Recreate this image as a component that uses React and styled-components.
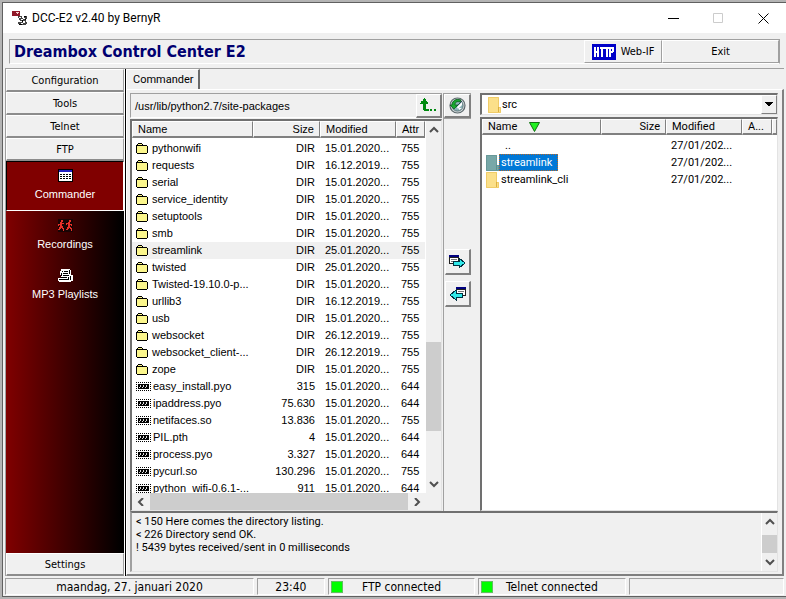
import styled, { createGlobalStyle } from "styled-components";

const GlobalStyle = createGlobalStyle`
  * {
    box-sizing: border-box;
  }

  body {
    margin: 0;
    font-family: "DejaVu Sans Condensed", "DejaVu Sans", Tahoma, sans-serif;
    font-size: 11px;
    color: #000;
  }

  button {
    font: inherit;
    color: inherit;
    padding: 0;
    margin: 0;
    border: 0;
    background: none;
  }

  svg {
    display: block;
    flex: none;
  }
`;

const Desktop = styled.div`
  height: 100vh;
  min-height: 400px;
  padding: 2px 0 2px 2px;
  background: #b4b4b4;
`;

const Window = styled.div`
  height: 100%;
  display: flex;
  flex-direction: column;
  border: 1px solid #606060;
  border-right: 0;
  background: #f0f0f0;
`;

const TitleBar = styled.header`
  display: flex;
  align-items: center;
  height: 30px;
  padding-left: 9px;
  background: #fff;
  font-family: Roboto, "Noto Sans", sans-serif;
  font-size: 12px;

  span {
    flex: 1;
    margin-left: 5px;
  }
`;

const WindowButton = styled.button`
  display: flex;
  align-items: center;
  justify-content: center;
  width: 45px;
  height: 29px;
`;

const Banner = styled.div`
  display: flex;
  height: 25px;
  margin: 6px 6px 4px;
  border: 1px solid #a0a0a0;
  border-bottom-color: #fff;

  h1 {
    flex: 1;
    margin: 0;
    padding-left: 4px;
    font-size: 16px;
    line-height: 23px;
    color: #000070;
  }
`;

const BannerButton = styled.button`
  display: flex;
  align-items: center;
  justify-content: center;
  gap: 5px;
  width: ${(props) => props.$width}px;
  border: 1px solid #a0a0a0;
  border-top-color: #fff;
  border-left-color: #fff;
`;

const Main = styled.div`
  flex: 1;
  min-height: 0;
  display: flex;
  margin: 0 2px;
  border-top: 1px solid #a0a0a0;
`;

const Sidebar = styled.nav`
  display: flex;
  flex-direction: column;
  width: 120px;
  border-left: 1px solid #a0a0a0;
  border-right: 1px solid #fff;
`;

const SideButton = styled.button`
  height: 23px;
  border-top: 1px solid #fff;
  border-left: 1px solid #fff;
  border-right: 1px solid #a0a0a0;
  border-bottom: 2px solid #8c8c8c;
  font-size: 11px;
`;

const SideGroup = styled.div`
  flex: 1;
  display: flex;
  flex-direction: column;
  background: linear-gradient(90deg, #800000, #000 98%);
`;

const SideItem = styled.button`
  display: flex;
  flex-direction: column;
  align-items: center;
  gap: 6px;
  height: 50px;
  padding-top: 7px;
  border: 1px solid;
  border-color: ${(props) => (props.$active ? "#000 #fff #fff #000" : "transparent")};
  background: ${(props) => (props.$active ? "#800000" : "none")};
  font-family: "Liberation Sans", Arial, sans-serif;
  font-size: 11px;
  line-height: 13px;
  color: #fff;
`;

const Page = styled.main`
  flex: 1;
  min-width: 0;
  display: flex;
  flex-direction: column;
  border-left: 1px solid #000;
  font-family: Roboto, Tahoma, sans-serif;
`;

const TabRow = styled.div`
  height: 20px;
`;

const Tab = styled.button`
  height: 20px;
  padding: 0 4px 0 6px;
  border-top: 1px solid #fff;
  border-left: 1px solid #fff;
  border-right: 2px solid #696969;
`;

const TabPanel = styled.section`
  flex: 1;
  min-height: 0;
  display: flex;
  flex-direction: column;
  padding: 3px 4px 2px 3px;
  border-top: 1px solid #fff;
  border-left: 1px solid #fff;
  border-right: 2px solid #808080;
  border-bottom: 2px solid #808080;
`;

const Panes = styled.div`
  flex: 1;
  min-height: 0;
  display: grid;
  grid-template-columns: minmax(0, 312fr) 28px minmax(0, 306fr);
  column-gap: 1px;
`;

const Pane = styled.div`
  min-height: 0;
  display: flex;
  flex-direction: column;
  margin-left: ${(props) => (props.$inset ? 8 : 0)}px;
`;

const PathBar = styled.div`
  display: flex;
  align-items: center;
  height: 25px;
  margin-bottom: 1px;
  border: 1px solid #a0a0a0;
  border-bottom-color: #fff;
  border-right: 0;
  font-family: "Liberation Sans", Arial, sans-serif;
  font-size: 11px;

  span {
    flex: 1;
    padding-left: 4px;
  }
`;

const ToolButton = styled.button`
  display: flex;
  align-items: center;
  justify-content: center;
  width: ${(props) => props.$width || 26}px;
  height: ${(props) => props.$height || 24}px;
  border: 1px solid #fff;
  border-right: 2px solid #808080;
  border-bottom: 2px solid #808080;
`;

const Middle = styled.div`
  display: flex;
  flex-direction: column;
  align-items: flex-end;
  border-top: 1px solid #a0a0a0;
  border-left: 1px solid #a0a0a0;

  hr {
    align-self: stretch;
    margin: 0 0 130px;
    border: 0;
    border-top: 1px solid #a0a0a0;
  }

  button + button {
    margin-top: 6px;
  }
`;

const ListBox = styled.div`
  flex: 1;
  min-height: 0;
  display: grid;
  grid-template-columns: minmax(0, 1fr) auto;
  grid-template-rows: minmax(0, 1fr) auto;
  border: 1px solid #e3e3e3;
  border-top: 2px solid #707070;
  border-left: 2px solid #707070;
  background: #fff;
`;

const Viewport = styled.div`
  overflow: hidden;
`;

const FileTable = styled.table`
  width: 100%;
  table-layout: fixed;
  border-collapse: separate;
  border-spacing: 0;
  font-family: ${(props) => (props.$plain ? '"Liberation Sans", Arial, sans-serif' : "inherit")};

  th {
    height: ${(props) => (props.$plain ? 17 : 16)}px;
    padding: 0 5px;
    border-top: 1px solid #fff;
    border-left: 1px solid #fff;
    border-right: 1px solid #808080;
    border-bottom: 2px solid #808080;
    background: #f0f0f0;
    font-weight: 400;
    line-height: 13px;
    text-align: left;
    white-space: nowrap;
  }

  td {
    height: 17px;
    padding: 0 5px;
    line-height: 17px;
    vertical-align: top;
    white-space: nowrap;
    overflow: hidden;
  }

  th:nth-child(2),
  td:nth-child(2) {
    text-align: right;
  }

  thead::after {
    content: "";
    display: block;
    height: 2px;
  }
`;

const FileRow = styled.tr`
  background: ${(props) => (props.$marked ? "#f0f0f0" : "none")};
`;

const FileName = styled.div`
  display: flex;
  align-items: center;
  gap: ${(props) => props.$gap}px;
  margin-left: -1px;
  height: 17px;
`;

const Label = styled.span`
  padding: 0 6px 0 2px;
  line-height: 17px;
  background: ${(props) => (props.$selected ? "#0078d7" : "none")};
  color: ${(props) => (props.$selected ? "#fff" : "inherit")};
  outline: ${(props) => (props.$selected ? "1px dotted #b86828" : "none")};
  outline-offset: -1px;
`;

const SortHead = styled.div`
  display: flex;
  align-items: center;
  gap: 12px;
`;

const VScroll = styled.div`
  display: flex;
  flex-direction: column;
  align-items: center;
  width: 16px;
  background: #f0f0f0;
  border-left: 1px solid #fff;

  button {
    padding: 5px 0;
  }
`;

const HScroll = styled.div`
  grid-column: 1 / -1;
  display: flex;
  align-items: center;
  height: 17px;
  background: #f0f0f0;

  button {
    padding: 0 5px;
  }
`;

const Spacer = styled.div`
  flex: ${(props) => props.$size};
`;

const Thumb = styled.div`
  flex: ${(props) => props.$size};
  align-self: stretch;
  background: #cdcdcd;
`;

const Combo = styled.div`
  position: relative;
  margin-bottom: 2px;

  select {
    display: block;
    width: 100%;
    height: 22px;
    padding: 0 20px 0 20px;
    appearance: none;
    border: 1px solid #e3e3e3;
    border-top: 2px solid #707070;
    border-left: 2px solid #707070;
    border-radius: 0;
    background: #fff;
    color: #000;
    font: inherit;
  }

  > svg {
    position: absolute;
    top: 4px;
    left: 8px;
  }
`;

const ComboArrow = styled.span`
  position: absolute;
  top: 2px;
  right: 1px;
  bottom: 1px;
  width: 16px;
  display: flex;
  align-items: center;
  justify-content: center;
  border: 1px solid #fff;
  border-right-color: #808080;
  border-bottom-color: #808080;
  background: #f0f0f0;
  pointer-events: none;
`;

const Log = styled.div`
  display: flex;
  height: 61px;
  border: 1px solid #e3e3e3;
  border-top: 2px solid #707070;
  border-left: 2px solid #a0a0a0;

  textarea {
    flex: 1;
    padding: 2px 4px;
    border: 0;
    outline: 0;
    resize: none;
    overflow: hidden;
    background: none;
    color: #000;
    font: inherit;
    line-height: 13px;
  }
`;

const StatusBar = styled.footer`
  display: flex;
  gap: 3px;
  margin: 2px 2px 1px;
  font-size: 12px;
`;

const StatusCell = styled.div`
  flex: ${(props) => props.$size} 1 ${(props) => props.$size}px;
  display: flex;
  align-items: center;
  height: 17px;
  padding: 0 2px;
  border: 1px solid #a0a0a0;
  border-right-color: #fff;
  border-bottom-color: #fff;

  span {
    flex: 1;
    text-align: center;
    white-space: nowrap;
  }

  i + span {
    padding-right: 12px;
  }
`;

const Lamp = styled.i`
  width: 12px;
  height: 12px;
  border: 1px solid #60c060;
  background: #00ff00;
`;

const AppIcon = () => (
  <svg width="15" height="16" shapeRendering="crispEdges">
    <path d="M0 1h8v5H0z" fill="#901828" />
    <path d="M4 2h3v1H4zM5 3h1v1H5z" fill="#f8d0d0" />
    <path d="M6 6h4v2h2V6h3v3h-1v3h1v2h-1v1H8v-1H6v-2h2v-2H7V8H6z" fill="#444" />
    <path d="M7 7h2v1H7zM9 9h2v1H9zM11 8h2v1h-2zM8 11h2v1H8zM11 11h2v2h-2zM9 13h2v1H9z" fill="#fff" />
    <path d="M12 6h2v1h-2zM10 10h1v2h-1zM13 9h1v1h-1zM7 14h3v1H7z" fill="#000" />
  </svg>
);

const HttpIcon = () => (
  <svg width="24" height="16" shapeRendering="crispEdges">
    <path d="M0 0h24v16H0z" fill="#0000c8" />
    <path
      d="M3 3v10M6 3v10M3 8h4M8 4h5M10 3v10M13 4h4M15 3v10M18 3v10M18 4h4M21 4v4M18 8h3"
      stroke="#fff"
      strokeWidth="2"
      fill="none"
    />
  </svg>
);

const GridIcon = () => (
  <svg width="15" height="13" shapeRendering="crispEdges">
    <path d="M0 0h15v13H0z" fill="#000" />
    <path d="M1 1h13v2H1z" fill="#2020c0" />
    <path d="M1 3h13v9H1z" fill="#fff" />
    <path d="M2 5.5h11M2 7.5h11M2 9.5h11" stroke="#000" strokeDasharray="2 1" />
  </svg>
);

const RunnersIcon = () => (
  <svg width="15" height="13" shapeRendering="crispEdges">
    <path d="M0 0h15v13H0z" fill="#180404" />
    <path
      d="M3 1h2v2H3zM2 3h2v1h2v1H4v2h1v2h1v3H5v-2H4V9H3v1H2v1H0v-1h1V8h1V6H1v1H0V5h2zM11 1h2v2h-2zM10 3h2v2h2v2h-1V6h-1v2h1v1h1v3h-1v-2h-1V9h-1v1h-1v1H8v-1h1V8h1V5H9v1H8V4h2z"
      fill="#e83028"
    />
  </svg>
);

const PlaylistIcon = () => (
  <svg width="15" height="13" shapeRendering="crispEdges">
    <path d="M3 0h9v1h1v5h2v6h-2v1H1v-1H0V9h3V6H2V2h1z" fill="#fff" />
    <path
      d="M4 2h1v1H4zM6 2h4v1H6zM5 4h5v1H5zM5 6h6v1H5zM11 1h1v4h-1zM3 4h1v3H3zM1 10h9v1H1zM10 8h1v3h-1zM3 8h6v1H3zM12 7h1v4h-1z"
      fill="#000"
    />
  </svg>
);

const FolderIcon = () => (
  <svg width="12" height="11" shapeRendering="crispEdges">
    <path d="M1 1h1V0h4v1h1v1h4v1h1v7h-1v1H1v-1H0V2h1z" fill="#000" />
    <path d="M2 1h4v1H2zM1 3h10v7H1z" fill="#fbf68c" />
  </svg>
);

const BinaryIcon = () => (
  <svg width="15" height="9" shapeRendering="crispEdges">
    <path d="M0 .5h15M0 8.5h15" stroke="#000" strokeDasharray="1 1" />
    <path d="M.5 0v9M14.5 0v9" stroke="#000" strokeDasharray="1 1" />
    <path d="M2 2h11v5H2z" fill="#000" />
    <path d="M3 5h1v1H3zM4 3h1v2H4zM6 5h1v1H6zM7 3h1v2H7zM9 5h1v1H9zM10 3h1v2h-1z" fill="#ddd" />
  </svg>
);

const WinFolder = ({ selected }) => (
  <svg width="13" height="16">
    <path d="M0 0h11v10h2v6H0z" fill={selected ? "#78a8a8" : "#fbe08a"} />
    <path d="M.5 .5h10v10h2v5H.5z" fill="none" stroke={selected ? "#689898" : "#f0cc68"} />
    <path d="M10.5 10v5" stroke={selected ? "#5c9090" : "#dcb040"} />
  </svg>
);

const UpIcon = () => (
  <svg width="17" height="14" shapeRendering="crispEdges">
    <path d="M4 0h1v1h1v2h1v1h1v2H6v5h3v2H4v-1H3V6H0V5h1V3h2V1h1z" fill="#008a10" />
    <path d="M10 11h2v2h-2zM14 11h2v2h-2z" fill="#008a10" />
  </svg>
);

const HistoryIcon = () => (
  <svg width="17" height="17" viewBox="0 0 17 17">
    <circle cx="8.5" cy="8.5" r="7.5" fill="#d4dcde" stroke="#5c686c" strokeWidth="1.2" />
    <circle cx="8.5" cy="8.5" r="5.6" fill="#8cb4b8" stroke="#506468" strokeWidth=".8" />
    <path d="M8 10l5-5v3l-4 4zM10 11h3l-3 2z" fill="#fff" />
    <path d="M7 10l6-6" stroke="#284858" strokeWidth="1" />
    <path d="M12 3C7 1 3 4 3 8H1l4 4 4-4H6c0-3 2-4 5-3z" fill="#18a830" stroke="#085818" strokeWidth=".7" />
  </svg>
);

const TransferIcon = ({ back }) => (
  <svg width="17" height="14" shapeRendering="crispEdges">
    <g transform={back ? "translate(7 0)" : undefined}>
      <path d="M0 0h10v9H0z" fill="#202020" />
      <path d="M0 0h10v2H0z" fill="#000080" />
      <path d="M1 3h8v5H1z" fill="#fff" />
      <path d="M2 4.5h6M2 6.5h4" stroke="#777" />
    </g>
    <path
      d="M4 6h6V3l6 5-6 5v-3H4z"
      transform={back ? "translate(17 0) scale(-1 1)" : undefined}
      fill="#30e8e8"
      stroke="#003040"
    />
  </svg>
);

const arrows = {
  up: "M1 6l4-4 4 4",
  down: "M1 2l4 4 4-4",
  left: "M6 0L2 4l4 4",
  right: "M2 0l4 4-4 4",
};

const Chevron = ({ dir }) => {
  const tall = dir === "left" || dir === "right";
  return (
    <svg width={tall ? 8 : 10} height="8">
      <path d={arrows[dir]} fill="none" stroke="#505050" strokeWidth="2" />
    </svg>
  );
};

const remoteFiles = [
  ["pythonwifi", "DIR", "15.01.2020...", "755"],
  ["requests", "DIR", "16.12.2019...", "755"],
  ["serial", "DIR", "15.01.2020...", "755"],
  ["service_identity", "DIR", "15.01.2020...", "755"],
  ["setuptools", "DIR", "15.01.2020...", "755"],
  ["smb", "DIR", "15.01.2020...", "755"],
  ["streamlink", "DIR", "25.01.2020...", "755"],
  ["twisted", "DIR", "25.01.2020...", "755"],
  ["Twisted-19.10.0-p...", "DIR", "15.01.2020...", "755"],
  ["urllib3", "DIR", "16.12.2019...", "755"],
  ["usb", "DIR", "15.01.2020...", "755"],
  ["websocket", "DIR", "26.12.2019...", "755"],
  ["websocket_client-...", "DIR", "26.12.2019...", "755"],
  ["zope", "DIR", "15.01.2020...", "755"],
  ["easy_install.pyo", "315", "15.01.2020...", "644"],
  ["ipaddress.pyo", "75.630", "15.01.2020...", "644"],
  ["netifaces.so", "13.836", "15.01.2020...", "755"],
  ["PIL.pth", "4", "15.01.2020...", "644"],
  ["process.pyo", "3.327", "15.01.2020...", "644"],
  ["pycurl.so", "130.296", "15.01.2020...", "755"],
  ["python_wifi-0.6.1-...", "911", "15.01.2020...", "644"],
];

const localFiles = ["streamlink", "streamlink_cli"];

const logText = `< 150 Here comes the directory listing.
< 226 Directory send OK.
! 5439 bytes received/sent in 0 milliseconds`;

const RemotePane = () => (
  <Pane>
    <PathBar>
      <span>/usr/lib/python2.7/site-packages</span>
      <ToolButton aria-label="Up one directory">
        <UpIcon />
      </ToolButton>
    </PathBar>
    <ListBox>
      <Viewport>
        <FileTable $plain>
          <colgroup>
            <col />
            <col width="67" />
            <col width="76" />
            <col width="29" />
          </colgroup>
          <thead>
            <tr>
              <th>Name</th>
              <th>Size</th>
              <th>Modified</th>
              <th>Attr</th>
            </tr>
          </thead>
          <tbody>
            {remoteFiles.map(([name, size, modified, attr]) => (
              <FileRow key={name} $marked={name === "streamlink"}>
                <td>
                  <FileName $gap={size === "DIR" ? 2 : 0}>
                    {size === "DIR" ? <FolderIcon /> : <BinaryIcon />}
                    <Label>{name}</Label>
                  </FileName>
                </td>
                <td>{size}</td>
                <td>{modified}</td>
                <td>{attr}</td>
              </FileRow>
            ))}
          </tbody>
        </FileTable>
      </Viewport>
      <VScroll>
        <button aria-label="Scroll up">
          <Chevron dir="up" />
        </button>
        <Spacer $size={204} />
        <Thumb $size={90} />
        <Spacer $size={44} />
        <button aria-label="Scroll down">
          <Chevron dir="down" />
        </button>
      </VScroll>
      <HScroll>
        <button aria-label="Scroll left">
          <Chevron dir="left" />
        </button>
        <Thumb $size={1} />
        <button aria-label="Scroll right">
          <Chevron dir="right" />
        </button>
        <Spacer $size="0 0 15px" />
      </HScroll>
    </ListBox>
  </Pane>
);

const LocalPane = () => (
  <Pane $inset>
    <Combo>
      <select aria-label="Local folder" defaultValue="src">
        <option>src</option>
      </select>
      <WinFolder />
      <ComboArrow>
        <svg width="8" height="5" shapeRendering="crispEdges">
          <path d="M0 0h8L4 5z" />
        </svg>
      </ComboArrow>
    </Combo>
    <ListBox>
      <Viewport>
        <FileTable>
          <colgroup>
            <col />
            <col width="65" />
            <col width="76" />
            <col width="30" />
            <col width="5" />
          </colgroup>
          <thead>
            <tr>
              <th>
                <SortHead>
                  Name
                  <svg width="11" height="10">
                    <path d="M.5 .5h10l-5 9z" fill="#20f020" stroke="#107010" />
                  </svg>
                </SortHead>
              </th>
              <th>Size</th>
              <th>Modified</th>
              <th>A...</th>
              <th aria-hidden="true" />
            </tr>
          </thead>
          <tbody>
            <FileRow>
              <td>
                <FileName $gap={6}>
                  <Spacer $size="0 0 13px" />
                  <span>..</span>
                </FileName>
              </td>
              <td />
              <td>27/01/202...</td>
              <td />
              <td />
            </FileRow>
            {localFiles.map((name) => (
              <FileRow key={name}>
                <td>
                  <FileName $gap={0}>
                    <WinFolder selected={name === "streamlink"} />
                    <Label $selected={name === "streamlink"}>{name}</Label>
                  </FileName>
                </td>
                <td />
                <td>27/01/202...</td>
                <td />
                <td />
              </FileRow>
            ))}
          </tbody>
        </FileTable>
      </Viewport>
    </ListBox>
  </Pane>
);

const App = () => {
  return (
    <>
      <GlobalStyle />
      <Desktop>
        <Window>
          <TitleBar>
            <AppIcon />
            <span>DCC-E2 v2.40 by BernyR</span>
            <WindowButton aria-label="Minimize">
              <svg width="11" height="11">
                <path d="M0 5.5h11" stroke="#000" />
              </svg>
            </WindowButton>
            <WindowButton aria-label="Maximize" disabled>
              <svg width="11" height="11">
                <path d="M.5 .5h9v9h-9z" fill="none" stroke="#ccc" />
              </svg>
            </WindowButton>
            <WindowButton aria-label="Close">
              <svg width="11" height="11">
                <path d="M.5 .5l10 10M10.5 .5l-10 10" stroke="#000" />
              </svg>
            </WindowButton>
          </TitleBar>

          <Banner>
            <h1>Dreambox Control Center E2</h1>
            <BannerButton $width={78}>
              <HttpIcon />
              Web-IF
            </BannerButton>
            <BannerButton $width={117}>Exit</BannerButton>
          </Banner>

          <Main>
            <Sidebar>
              <SideButton>Configuration</SideButton>
              <SideButton>Tools</SideButton>
              <SideButton>Telnet</SideButton>
              <SideButton>FTP</SideButton>
              <SideGroup>
                <SideItem $active>
                  <GridIcon />
                  Commander
                </SideItem>
                <SideItem>
                  <RunnersIcon />
                  Recordings
                </SideItem>
                <SideItem>
                  <PlaylistIcon />
                  MP3 Playlists
                </SideItem>
              </SideGroup>
              <SideButton>Settings</SideButton>
            </Sidebar>

            <Page>
              <TabRow>
                <Tab>Commander</Tab>
              </TabRow>
              <TabPanel>
                <Panes>
                  <RemotePane />
                  <Middle>
                    <ToolButton $width={27} aria-label="History">
                      <HistoryIcon />
                    </ToolButton>
                    <hr />
                    <ToolButton $height={26} aria-label="Copy to local">
                      <TransferIcon />
                    </ToolButton>
                    <ToolButton $height={26} aria-label="Copy to receiver">
                      <TransferIcon back />
                    </ToolButton>
                  </Middle>
                  <LocalPane />
                </Panes>
                <Log>
                  <textarea aria-label="FTP log" readOnly value={logText} />
                  <VScroll>
                    <button aria-label="Scroll up">
                      <Chevron dir="up" />
                    </button>
                    <Spacer $size={4} />
                    <Thumb $size={17} />
                    <button aria-label="Scroll down">
                      <Chevron dir="down" />
                    </button>
                  </VScroll>
                </Log>
              </TabPanel>
            </Page>
          </Main>

          <StatusBar>
            <StatusCell $size={250}>
              <span>maandag, 27. januari 2020</span>
            </StatusCell>
            <StatusCell $size={68}>
              <span>23:40</span>
            </StatusCell>
            <StatusCell $size={148}>
              <Lamp />
              <span>FTP connected</span>
            </StatusCell>
            <StatusCell $size={148}>
              <Lamp />
              <span>Telnet connected</span>
            </StatusCell>
            <StatusCell $size={156} />
          </StatusBar>
        </Window>
      </Desktop>
    </>
  );
};

export default App;
